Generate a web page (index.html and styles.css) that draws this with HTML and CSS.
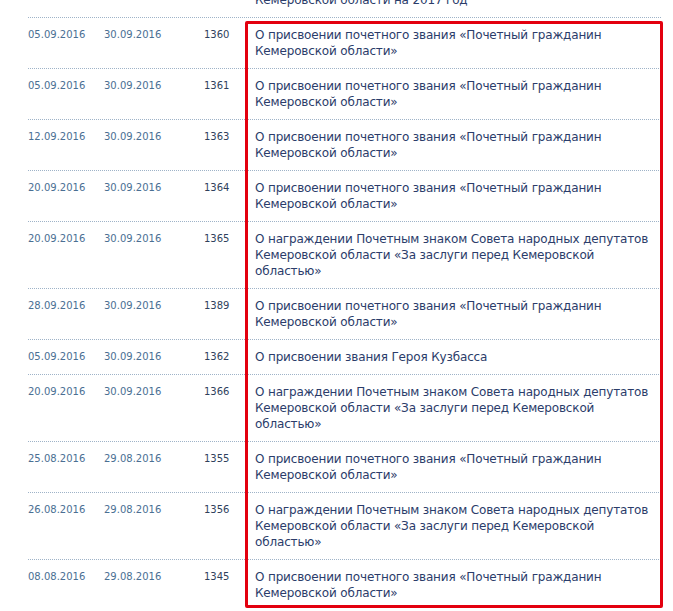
FILE: index.html
```html
<!DOCTYPE html>
<html lang="ru">
<head>
<meta charset="utf-8">
<title>Документы</title>
<link rel="stylesheet" href="styles.css">
</head>
<body>
<div class="docs">
  <div class="row prev">
    <div class="c d"></div><div class="c d"></div><div class="c n"></div>
    <div class="c t">Об утверждении перечня<br>Кемеровской области на 2017 год</div>
  </div>
  <div class="group">
    <div class="row"><div class="c d">05.09.2016</div><div class="c d">30.09.2016</div><div class="c n">1360</div><div class="c t">О присвоении почетного звания «Почетный гражданин Кемеровской области»</div></div>
    <div class="row"><div class="c d">05.09.2016</div><div class="c d">30.09.2016</div><div class="c n">1361</div><div class="c t">О присвоении почетного звания «Почетный гражданин Кемеровской области»</div></div>
    <div class="row"><div class="c d">12.09.2016</div><div class="c d">30.09.2016</div><div class="c n">1363</div><div class="c t">О присвоении почетного звания «Почетный гражданин Кемеровской области»</div></div>
    <div class="row"><div class="c d">20.09.2016</div><div class="c d">30.09.2016</div><div class="c n">1364</div><div class="c t">О присвоении почетного звания «Почетный гражданин Кемеровской области»</div></div>
    <div class="row"><div class="c d">20.09.2016</div><div class="c d">30.09.2016</div><div class="c n">1365</div><div class="c t">О награждении Почетным знаком Совета народных депутатов Кемеровской области «За заслуги перед Кемеровской областью»</div></div>
    <div class="row"><div class="c d">28.09.2016</div><div class="c d">30.09.2016</div><div class="c n">1389</div><div class="c t">О присвоении почетного звания «Почетный гражданин Кемеровской области»</div></div>
    <div class="row"><div class="c d">05.09.2016</div><div class="c d">30.09.2016</div><div class="c n">1362</div><div class="c t">О присвоении звания Героя Кузбасса</div></div>
    <div class="row"><div class="c d">20.09.2016</div><div class="c d">30.09.2016</div><div class="c n">1366</div><div class="c t">О награждении Почетным знаком Совета народных депутатов Кемеровской области «За заслуги перед Кемеровской областью»</div></div>
    <div class="row"><div class="c d">25.08.2016</div><div class="c d">29.08.2016</div><div class="c n">1355</div><div class="c t">О присвоении почетного звания «Почетный гражданин Кемеровской области»</div></div>
    <div class="row"><div class="c d">26.08.2016</div><div class="c d">29.08.2016</div><div class="c n">1356</div><div class="c t">О награждении Почетным знаком Совета народных депутатов Кемеровской области «За заслуги перед Кемеровской областью»</div></div>
    <div class="row"><div class="c d">08.08.2016</div><div class="c d">29.08.2016</div><div class="c n">1345</div><div class="c t">О присвоении почетного звания «Почетный гражданин Кемеровской области»</div></div>
    <div class="highlight"></div>
  </div>
</div>
</body>
</html>
```
FILE: styles.css
```css
html, body {
  margin: 0;
  padding: 0;
  background: #fff;
}
body {
  font-family: "DejaVu Sans", Verdana, sans-serif;
  overflow: hidden;
}
.docs {
  margin-left: 28px;
  width: 633px;
  margin-top: -33px;
}
.group {
  position: relative;
}
.row {
  display: grid;
  grid-template-columns: 76px 100px 41px 1fr;
  border-top: 1px dotted #9fb3c8;
}
.row.prev {
  border-top: none;
}
.c {
  padding: 9px 0;
  line-height: 16px;
}
.d {
  font-size: 10px;
  color: #4a6f93;
}
.n {
  font-size: 10px;
  color: #2f3f5c;
}
.t {
  font-size: 12px;
  letter-spacing: -0.16px;
  color: #2b3c6a;
  padding-left: 10px;
  padding-right: 4px;
}
.highlight {
  position: absolute;
  left: 217px;
  top: 4px;
  width: 412px;
  height: 581px;
  border: 3px solid #e3000f;
  border-radius: 2px;
}
```
